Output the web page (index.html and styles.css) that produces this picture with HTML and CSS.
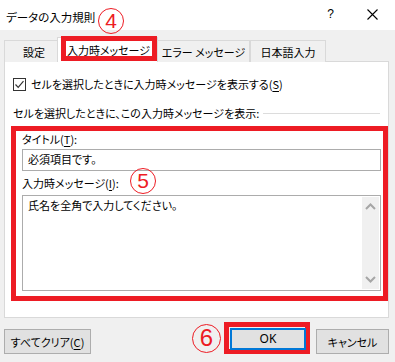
FILE: index.html
```html
<!DOCTYPE html>
<html lang="ja">
<head>
<meta charset="utf-8">
<link rel="stylesheet" href="styles.css">
</head>
<body>
<div class="dialog">
  <div class="titlebar">
    <span class="title">データの入力規則</span>
    <span class="help">?</span>
    <span class="close"><svg width="11" height="11" viewBox="0 0 11 11"><path d="M0.5 0.5 L10.5 10.5 M10.5 0.5 L0.5 10.5" stroke="#000" stroke-width="1.1" fill="none"/></svg></span>
  </div>
  <div class="tabs">
    <div class="tab t1">設定</div>
    <div class="tab active">入力時メッセージ</div>
    <div class="tab t3">エラー メッセージ</div>
    <div class="tab t4">日本語入力</div>
  </div>
  <div class="panel">
    <div class="checkrow">
      <span class="checkbox"><svg width="11" height="11" viewBox="0 0 11 11"><path d="M1.5 5.5 L4.2 8.3 L9.5 2.2" stroke="#333" stroke-width="1.2" fill="none"/></svg></span>
      <span>セルを選択したときに入力時メッセージを表示する(<u>S</u>)</span>
    </div>
    <div class="group">
      <span>セルを選択したときに、この入力時メッセージを表示:</span>
      <span class="rule"></span>
    </div>
    <div class="redbox">
      <div class="label">タイトル(<u>T</u>):</div>
      <div class="input">必須項目です。</div>
      <div class="label l2">入力時メッセージ(<u>I</u>):</div>
      <div class="textarea">
        <div class="tatext">氏名を全角で入力してください。</div>
        <div class="scroll">
          <svg width="11" height="7" viewBox="0 0 11 7"><path d="M1 6 L5.5 1.5 L10 6" stroke="#a6a6a6" stroke-width="2" fill="none"/></svg>
          <svg width="11" height="7" viewBox="0 0 11 7"><path d="M1 1 L5.5 5.5 L10 1" stroke="#a6a6a6" stroke-width="2" fill="none"/></svg>
        </div>
      </div>
    </div>
  </div>
  <div class="footer">
    <div class="btn clear">すべてクリア(<u>C</u>)</div>
    <div class="spacer"></div>
    <div class="okmark"><div class="btn ok">OK</div></div>
    <div class="btn cancel">キャンセル</div>
  </div>
  <div class="circle c4">4</div>
  <div class="circle c5">5</div>
  <div class="circle c6">6</div>
  <div class="tabmark"></div>
</div>
</body>
</html>
```
FILE: styles.css
```css
* { box-sizing: border-box; }
html, body { margin: 0; padding: 0; }
body {
  width: 395px;
  height: 362px;
  background: #f0f0f0;
  font-family: "Noto Sans CJK JP", "Noto Sans", sans-serif;
  font-size: 11px;
  font-feature-settings: "palt";
  color: #000;
  overflow: hidden;
}
u { text-decoration: underline; text-underline-offset: 2px; }
.dialog { position: relative; width: 395px; height: 362px; }

.titlebar {
  height: 30px;
  background: #fff;
  display: flex;
  align-items: center;
  padding-left: 6px;
}
.title { font-size: 11.5px; line-height: 16px; margin-top: 4px; }
.help { margin-left: auto; font-size: 12px; margin-top: -3px; font-family: "Liberation Sans", sans-serif; margin-right: 33px; }
.close { display: flex; margin-right: 17px; margin-top: -2px; }

.tabs {
  display: flex;
  height: 31px;
  padding-left: 4px;
  padding-top: 7px;
  align-items: flex-start;
}
.tab {
  height: 22px;
  margin-top: 3px;
  border: 1px solid #d9d9d9;
  border-bottom: none;
  background: #f0f0f0;
  display: flex;
  align-items: center;
  justify-content: center;
  line-height: 16px;
  padding-top: 1px;
  white-space: nowrap;
}
.t1 { width: 53px; border-right: none; padding-left: 6px; }
.active {
  width: 101px;
  height: 25px;
  margin-top: 0;
  background: #fff;
  position: relative;
  z-index: 1;
  padding-top: 0;
  padding-left: 2px;
}
.t3 { width: 92px; border-left: none; }
.t4 { width: 76px; border-left: 1px solid #d9d9d9; }

.panel {
  margin-left: 4px;
  width: 385px;
  height: 257px;
  background: #fff;
  border: 1px solid #d9d9d9;
  padding-left: 8px;
}
.checkrow {
  display: flex;
  align-items: center;
  height: 16px;
  margin-top: 14px;
  line-height: 16px;
  white-space: nowrap;
}
.checkbox {
  width: 13px;
  height: 13px;
  border: 1px solid #333;
  display: flex;
  align-items: center;
  justify-content: center;
  margin-right: 5px;
  background: #fff;
}
.group {
  display: flex;
  align-items: center;
  height: 16px;
  margin-top: 13px;
  line-height: 16px;
  white-space: nowrap;
}
.rule {
  flex: 1;
  height: 1px;
  background: #dcdcdc;
  margin: 1px 8px 0 4px;
}
.redbox {
  margin-top: 5px;
  margin-left: -2px;
  width: 377px;
  height: 175px;
  border: 5px solid #ed1c24;
  padding: 0 2px 0 6px;
}
.label { line-height: 16px; height: 16px; }
.input {
  margin-top: 2px;
  height: 22px;
  border: 1px solid #acacac;
  padding-left: 5px;
  line-height: 19px;
}
.l2 { margin-top: 4px; }
.textarea {
  margin-top: 4px;
  height: 96px;
  border: 1px solid #acacac;
  display: flex;
}
.tatext { flex: 1; padding: 1px 0 0 5px; line-height: 16px; }
.scroll {
  width: 17px;
  margin: 1px 1px 1px 0;
  background: #f0f0f0;
  display: flex;
  flex-direction: column;
  justify-content: space-between;
  align-items: center;
  padding: 6px 0 6px;
}

.footer {
  display: flex;
  align-items: flex-end;
  height: 36px;
  padding-left: 4px;
}
.btn {
  background: #e1e1e1;
  border: 1px solid #adadad;
  height: 25px;
  display: flex;
  align-items: center;
  justify-content: center;
  line-height: 16px;
  white-space: nowrap;
}
.clear { width: 87px; }
.spacer { flex: 1; }
.okmark {
  border: 5px solid #ed1c24;
  width: 86px;
  height: 32px;
  padding: 1px 1px 0 1px;
}
.ok {
  width: 76px;
  height: 22px;
  border: 2px solid #0078d7;
  font-family: "Noto Sans", sans-serif;
  font-feature-settings: normal;
  font-size: 12px;
}
.cancel { width: 73px; margin-left: 6px; margin-right: 6px; }

.circle {
  position: absolute;
  width: 26px;
  height: 26px;
  border: 1.5px solid #ed1c24;
  border-radius: 50%;
  color: #ed1c24;
  font-family: "Liberation Sans", sans-serif;
  font-size: 21px;
  line-height: 23px;
  text-align: center;
}
.c4 { left: 98px; top: 8px; }
.c5 { left: 130px; top: 168px; }
.c6 { left: 192px; top: 324px; width: 29px; height: 29px; line-height: 26px; font-size: 24px; }
.tabmark {
  position: absolute;
  left: 61px;
  top: 36px;
  width: 96px;
  height: 25px;
  border: 5px solid #ed1c24;
  z-index: 2;
}
```
